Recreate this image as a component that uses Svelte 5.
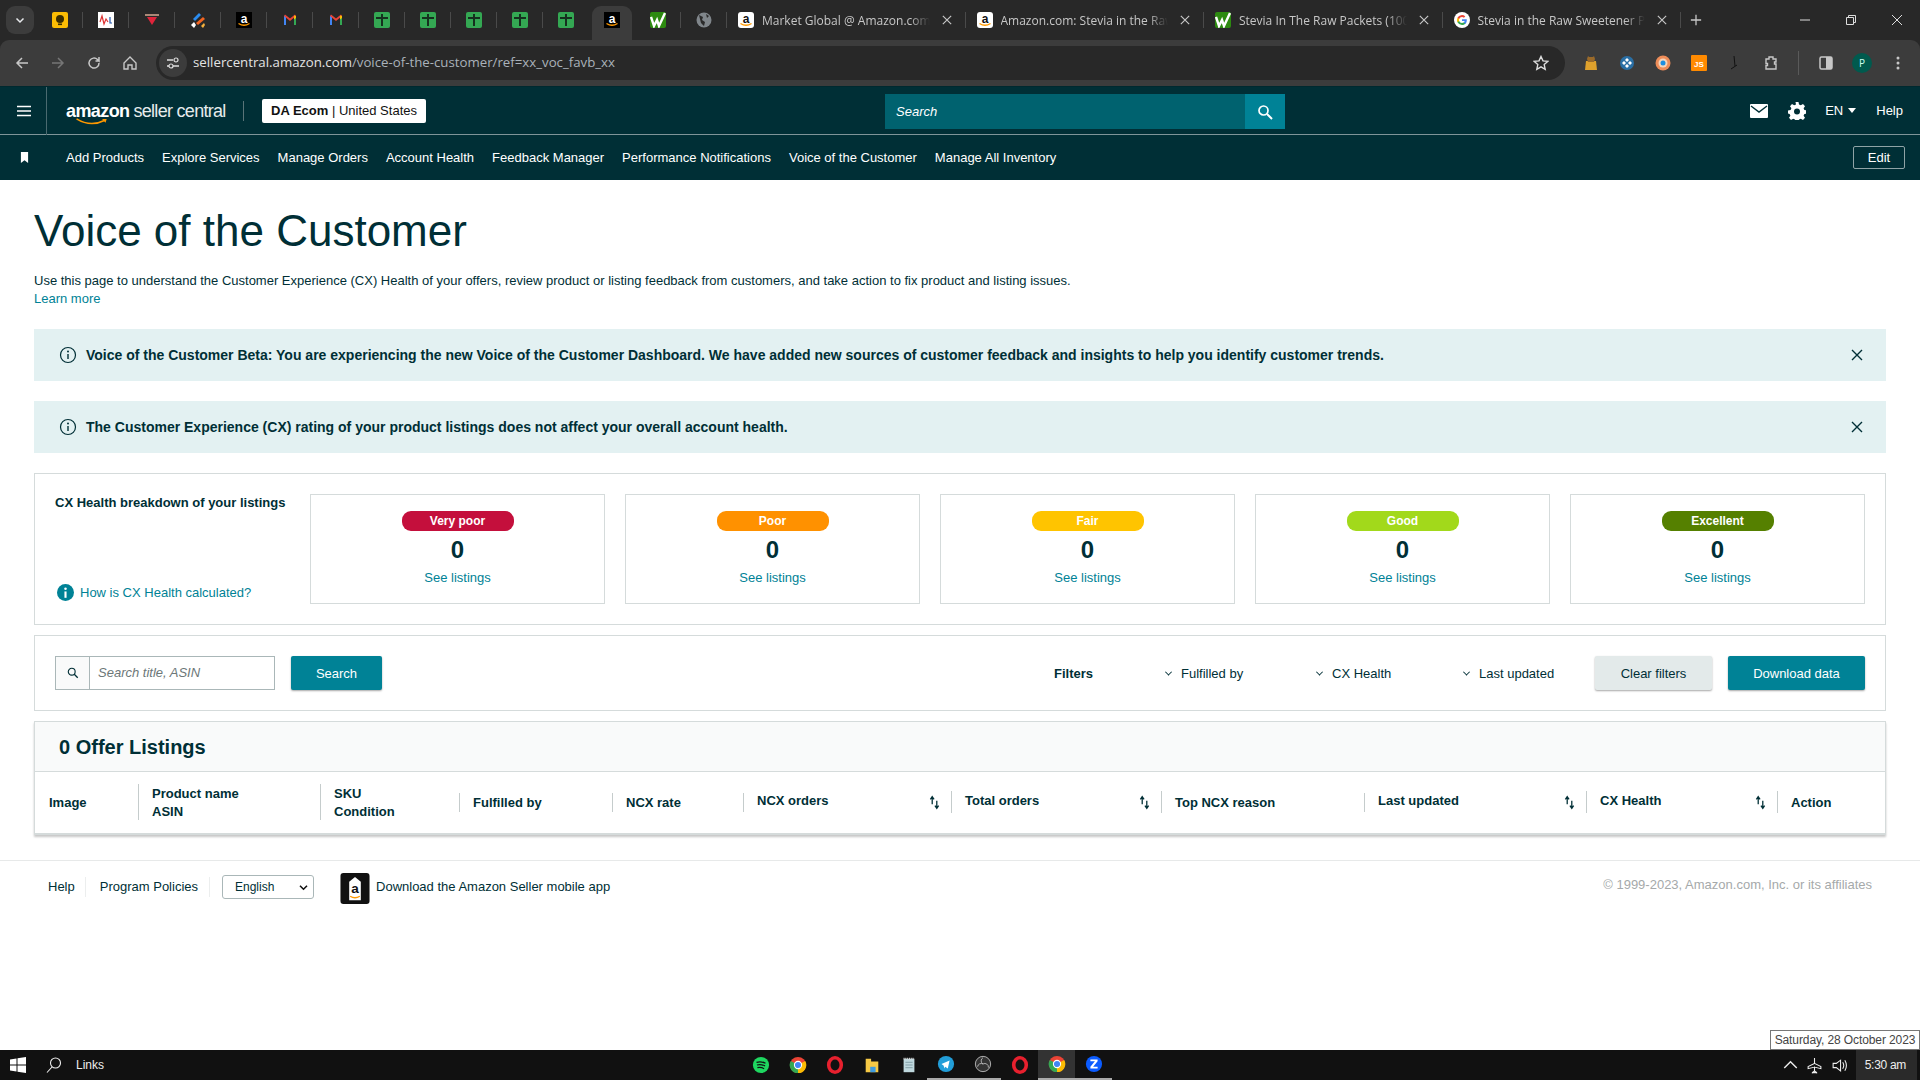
<script>
  const pinned = ['keep','wl','red','stack','amazon','gmail','gmail','sheet','sheet','sheet','sheet','sheet','amazon-active','wave','globe'];
  const tabs = [
    { icon: 'amazon-round', title: 'Market Global @ Amazon.com' },
    { icon: 'amazon-round', title: 'Amazon.com: Stevia in the Raw' },
    { icon: 'wave', title: 'Stevia In The Raw Packets (100' },
    { icon: 'google', title: 'Stevia in the Raw Sweetener Pa' }
  ];
  const nav = ['Add Products','Explore Services','Manage Orders','Account Health','Feedback Manager','Performance Notifications','Voice of the Customer','Manage All Inventory'];
  const health = [
    { label: 'Very poor', cls: 'vpoor' },
    { label: 'Poor', cls: 'poor' },
    { label: 'Fair', cls: 'fair' },
    { label: 'Good', cls: 'good' },
    { label: 'Excellent', cls: 'excellent' }
  ];
  const cols = [
    { lines: ['Image'], sep: '' },
    { lines: ['Product name','ASIN'], sep: 'tall' },
    { lines: ['SKU','Condition'], sep: 'tall' },
    { lines: ['Fulfilled by'], sep: 'short' },
    { lines: ['NCX rate'], sep: 'short' },
    { lines: ['NCX orders'], sep: 'short', sort: true },
    { lines: ['Total orders'], sep: 'mid', sort: true },
    { lines: ['Top NCX reason'], sep: 'mid' },
    { lines: ['Last updated'], sep: 'short', sort: true },
    { lines: ['CX Health'], sep: 'mid', sort: true },
    { lines: ['Action'], sep: 'mid' }
  ];
  const taskIcons = ['spotify','chrome','opera','folder','note','telegram','obs','opera','chrome','zoom'];
  const underlined = [5,6,8,9];
</script>

{#snippet favicon(kind)}
  {#if kind === 'keep'}
    <svg class="fav" viewBox="0 0 16 16"><rect width="16" height="16" rx="2" fill="#fbbc04"/><circle cx="8" cy="7" r="4" fill="#3a2d00"/><rect x="6" y="11.5" width="4" height="1.6" fill="#3a2d00"/></svg>
  {:else if kind === 'wl'}
    <svg class="fav" viewBox="0 0 16 16"><rect width="16" height="16" fill="#fff"/><path d="M2 10l2-6 2 8 2-5 2 3" fill="none" stroke="#d33" stroke-width="1.2"/><path d="M12 5v6h2" fill="none" stroke="#25a" stroke-width="1.2"/></svg>
  {:else if kind === 'red'}
    <svg class="fav" viewBox="0 0 16 16"><rect x="1" y="2" width="14" height="2" fill="#a87"/><path d="M3 5h10l-5 8z" fill="#e0243b"/></svg>
  {:else if kind === 'stack'}
    <svg class="fav" viewBox="0 0 16 16"><path d="M3 7l6-6 2 2-6 6z" fill="#2a8cf0"/><path d="M6 11l7-6 2 2-7 6z" fill="#f26522"/><path d="M11 14l3-3 1 2-2 3z" fill="#f5b03c"/><path d="M1 13l3-3 2 3-2 3z" fill="#fff"/></svg>
  {:else if kind === 'amazon' || kind === 'amazon-active'}
    <svg class="fav" viewBox="0 0 16 16"><rect width="16" height="16" fill="#000"/><text x="8" y="10.5" text-anchor="middle" class="fava">a</text><path d="M2.5 11.5q5.500 3.500 11 0" fill="none" stroke="#f90" stroke-width="1.300"/></svg>
  {:else if kind === 'amazon-round'}
    <svg class="fav" viewBox="0 0 16 16"><rect width="16" height="16" rx="3" fill="#fff"/><text x="8" y="10.500" text-anchor="middle" class="favb">a</text><path d="M2.500 11.500q5.500 3.500 11 0" fill="none" stroke="#f90" stroke-width="1.300"/></svg>
  {:else if kind === 'gmail'}
    <svg class="fav" viewBox="0 0 16 16"><path d="M2 13V4l2-.5V13z" fill="#4285f4"/><path d="M12 13V3.500l2 .5v9z" fill="#34a853"/><path d="M2 4l1-1.500 5 4 5-4L14 4 8 9z" fill="#ea4335"/><path d="M12 3.500L14 4v2l-2 1.500z" fill="#fbbc04"/></svg>
  {:else if kind === 'sheet'}
    <svg class="fav" viewBox="0 0 16 16"><rect width="16" height="16" rx="2" fill="#34a853"/><path d="M2 6h12M8 2v12" stroke="#16301f" stroke-width="2"/></svg>
  {:else if kind === 'wave'}
    <svg class="fav" viewBox="0 0 16 16"><rect width="16" height="16" rx="2" fill="#2d8a10"/><path d="M1 5l3 9 3-6 2 6 6-13" fill="none" stroke="#fff" stroke-width="2.400"/></svg>
  {:else if kind === 'globe'}
    <svg class="fav" viewBox="0 0 16 16"><circle cx="8" cy="8" r="7.500" fill="#80868b"/><path d="M3 3l4 2-1 3 3 2-1 4-3-3zM10 2l3 2-2 2z" fill="#2b2b2b"/></svg>
  {:else if kind === 'google'}
    <svg class="fav" viewBox="0 0 16 16"><circle cx="8" cy="8" r="8" fill="#fff"/><path d="M12.800 8.200c0-.4 0-.7-.1-1H8v1.900h2.700a2.400 2.400 0 0 1-1 1.500v1.300h1.600c1-.9 1.500-2.200 1.500-3.700z" fill="#4285f4"/><path d="M8 13c1.400 0 2.500-.4 3.300-1.200l-1.600-1.300c-.4.300-1 .5-1.700.5-1.300 0-2.400-.9-2.800-2H3.500v1.300A5 5 0 0 0 8 13z" fill="#34a853"/><path d="M5.200 9a3 3 0 0 1 0-2V5.700H3.500a5 5 0 0 0 0 4.600z" fill="#fbbc04"/><path d="M8 5c.8 0 1.400.3 1.900.8l1.400-1.400A5 5 0 0 0 3.500 5.700L5.200 7c.4-1.200 1.500-2 2.800-2z" fill="#ea4335"/></svg>
  {/if}
{/snippet}

{#snippet taskIcon(kind)}
  <svg class="task-svg" viewBox="0 0 20 20">
    {#if kind === 'spotify'}
      <circle cx="10" cy="10" r="9" fill="#1ed760"/><path d="M5 7q5-1.500 10 1M5.500 10q4.500-1 9 1M6 13q4-.8 7.500 1" fill="none" stroke="#111" stroke-width="1.400"/>
    {:else if kind === 'chrome'}
      <circle cx="10" cy="10" r="9" fill="#ea4335"/><path d="M10 10L2 5.500A9 9 0 0 0 10 19z" fill="#34a853"/><path d="M10 10l8-4.500A9 9 0 0 1 10 19z" fill="#fbbc04"/><circle cx="10" cy="10" r="4" fill="#4285f4" stroke="#fff" stroke-width="1.200"/>
    {:else if kind === 'opera'}
      <ellipse cx="10" cy="10" rx="7" ry="8" fill="none" stroke="#e7202e" stroke-width="4"/>
    {:else if kind === 'folder'}
      <path d="M3 3h6v3h8v12H3z" fill="#f6c945"/><rect x="8" y="12" width="6" height="6" fill="#3f9be0"/>
    {:else if kind === 'note'}
      <path d="M4 3h12v15H4z" fill="#bfd8de"/><path d="M6 7h8M6 10h8M6 13h8" stroke="#7d9aa3"/><path d="M4 3h12" stroke="#ddd" stroke-dasharray="1 1" stroke-width="2"/>
    {:else if kind === 'telegram'}
      <circle cx="10" cy="10" r="9" fill="#229ed9"/><path d="M5 10l9-4-2 9-3-2-1 2-.5-3z" fill="#fff"/>
    {:else if kind === 'obs'}
      <circle cx="10" cy="10" r="8.500" fill="#333" stroke="#bbb"/><path d="M10 3a4 4 0 0 0 0 7 4 4 0 0 1 6 4M4 13a4 4 0 0 1 6-3" fill="none" stroke="#bbb"/>
    {:else if kind === 'zoom'}
      <circle cx="10" cy="10" r="9" fill="#0b5cff"/><path d="M6 5h8v2L9 13h5v2H6v-2l5-6H6z" fill="#fff"/>
    {/if}
  </svg>
{/snippet}

{#snippet sortIcon()}
  <svg class="sort" viewBox="0 0 12 16"><path d="M3.500 10V2M1.500 4.500l2-3 2 3" fill="none" stroke="#002f36" stroke-width="1.400"/><path d="M8.500 6v8M6.500 11.500l2 3 2-3" fill="none" stroke="#002f36" stroke-width="1.400"/></svg>
{/snippet}

{#snippet closeIcon()}
  <svg class="x" viewBox="0 0 12 12"><path d="M1 1l10 10M11 1L1 11" stroke="currentColor" stroke-width="1.400"/></svg>
{/snippet}

{#snippet infoIcon()}
  <svg class="info" viewBox="0 0 18 18"><circle cx="9" cy="9" r="7.500" fill="none" stroke="#002f36" stroke-width="1.200"/><path d="M9 8v5" stroke="#002f36" stroke-width="1.400"/><circle cx="9" cy="5.500" r="1" fill="#002f36"/></svg>
{/snippet}

<div class="screen">
  <div class="tabstrip">
    <button class="tab-search" aria-label="Search tabs"><svg viewBox="0 0 12 12"><path d="M2.500 4.500L6 8l3.500-3.500" fill="none" stroke="#e8eaed" stroke-width="1.500"/></svg></button>
    {#each pinned as p, i}
      <div class="pin" class:active={p === 'amazon-active'} class:nosep={p === 'amazon-active' || pinned[i+1] === 'amazon-active'}>{@render favicon(p)}</div>
    {/each}
    <div class="tabs">
      {#each tabs as t}
        <div class="tab">
          {@render favicon(t.icon)}
          <span class="tab-title">{t.title}</span>
          <span class="tab-x">{@render closeIcon()}</span>
        </div>
      {/each}
    </div>
    <svg class="plus" viewBox="0 0 14 14"><path d="M7 1v12M1 7h12" stroke="#c7c7c7" stroke-width="1.500"/></svg>
    <div class="winctl">
      <svg viewBox="0 0 12 12"><path d="M1 6h10" stroke="#ddd"/></svg>
      <svg viewBox="0 0 12 12"><path d="M1.500 3.500h7v7h-7zM3.500 3.500v-2h7v7h-2" fill="none" stroke="#ddd"/></svg>
      <svg viewBox="0 0 12 12"><path d="M1 1l10 10M11 1L1 11" stroke="#ddd"/></svg>
    </div>
  </div>

  <div class="toolbar">
    <svg class="tb" viewBox="0 0 16 16"><path d="M14 8H3M8 3L3 8l5 5" fill="none" stroke="#c7c7c7" stroke-width="1.500"/></svg>
    <svg class="tb" viewBox="0 0 16 16"><path d="M2 8h11M8 3l5 5-5 5" fill="none" stroke="#767676" stroke-width="1.500"/></svg>
    <svg class="tb" viewBox="0 0 16 16"><path d="M13 8a5 5 0 1 1-1.500-3.500L13 6V2M13 6H9.500" fill="none" stroke="#c7c7c7" stroke-width="1.500"/></svg>
    <svg class="tb" viewBox="0 0 16 16"><path d="M2 8l6-6 6 6v6h-4v-4H6v4H2z" fill="none" stroke="#c7c7c7" stroke-width="1.400"/></svg>
    <div class="omni">
      <span class="site"><svg viewBox="0 0 14 14"><path d="M1 4h6M1 10h2M7 10h6" stroke="#dedede" stroke-width="1.300"/><circle cx="10" cy="4" r="2" fill="none" stroke="#dedede" stroke-width="1.200"/><circle cx="5" cy="10" r="2" fill="none" stroke="#dedede" stroke-width="1.200"/></svg></span>
      <span class="url"><b>sellercentral.amazon.com</b>/voice-of-the-customer/ref=xx_voc_favb_xx</span>
      <svg class="star" viewBox="0 0 16 16"><path d="M8 1.500l2 4.400 4.800.5-3.600 3.200 1 4.700L8 11.900l-4.200 2.400 1-4.700L1.200 6.400 6 5.900z" fill="none" stroke="#dedede" stroke-width="1.400"/></svg>
    </div>
    <div class="exts">
      <svg viewBox="0 0 16 16"><path d="M3 6h10l1 9H2z" fill="#dfa12c"/><path d="M5 1l1 1h4l1-1 1 3-1 3H5L4 4z" fill="#9a6a2a"/></svg>
      <svg viewBox="0 0 16 16"><circle cx="8" cy="8" r="7" fill="#2a6fa5"/><path d="M8 3l2 2-2 2-2-2zM8 9l2 2-2 2-2-2zM3 8l2-2 2 2-2 2zM9 8l2-2 2 2-2 2z" fill="#fff"/></svg>
      <svg viewBox="0 0 16 16"><circle cx="8" cy="8" r="7.500" fill="#ee8d59"/><circle cx="8" cy="8" r="4.500" fill="#f4d6bd"/><circle cx="8" cy="8" r="2.500" fill="#1d8fe0"/></svg>
      <svg viewBox="0 0 16 16"><rect width="16" height="16" rx="1" fill="#ff8a00"/><text x="8" y="11.500" text-anchor="middle" class="js">JS</text></svg>
      <svg viewBox="0 0 16 16"><path d="M7 1l1 10M4 14l6-4" stroke="#111" stroke-width="1"/></svg>
      <svg viewBox="0 0 16 16"><path d="M3 4h3V2h4v2h3v3h-1.500v2H13v5H3v-3.500h1.500v-2H3z" fill="none" stroke="#c7c7c7" stroke-width="1.400"/></svg>
      <span class="tbsep"></span>
      <svg viewBox="0 0 16 16"><rect x="2" y="2" width="12" height="12" rx="1.500" fill="none" stroke="#c7c7c7" stroke-width="1.500"/><rect x="8" y="2" width="6" height="12" fill="#c7c7c7"/></svg>
      <span class="avatar">P</span>
      <svg viewBox="0 0 16 16"><circle cx="8" cy="3" r="1.500" fill="#c7c7c7"/><circle cx="8" cy="8" r="1.500" fill="#c7c7c7"/><circle cx="8" cy="13" r="1.500" fill="#c7c7c7"/></svg>
    </div>
  </div>

  <header class="sc-header">
    <div class="burger"><svg viewBox="0 0 16 12"><path d="M1 1.500h14M1 6h14M1 10.500h14" stroke="#fff" stroke-width="1.700"/></svg></div>
    <div class="logo">
      <span class="logo-az">amazon<svg class="smile" viewBox="0 0 44 10"><path d="M2 1q18 11 36 2" fill="none" stroke="#f90" stroke-width="2"/><path d="M35 1l6 0-1.500 5z" fill="#f90"/></svg></span>
      <span class="logo-sc">seller central</span>
    </div>
    <div class="account"><b>DA Ecom</b> | United States</div>
    <div class="hsearch">
      <span class="hsearch-input">Search</span>
      <span class="hsearch-btn"><svg viewBox="0 0 16 16"><circle cx="6.500" cy="6.500" r="4.500" fill="none" stroke="#fff" stroke-width="1.700"/><path d="M10 10l5 5" stroke="#fff" stroke-width="2"/></svg></span>
    </div>
    <div class="hright">
      <svg class="mail" viewBox="0 0 18 14"><rect width="18" height="14" rx="1" fill="#fff"/><path d="M1 2l8 6 8-6" fill="none" stroke="#002f36" stroke-width="1.400"/></svg>
      <svg class="gear" viewBox="0 0 18 18"><path d="M7.500 0h3l.5 2.500 1.800.8L15 2l2 2.200-1.400 2 .8 1.800 2.600.5v3l-2.600.5-.8 1.800 1.400 2-2 2.200-2.200-1.300-1.800.8-.5 2.500h-3l-.5-2.500-1.800-.8L3 18l-2-2.200 1.400-2-.8-1.800L0 11.500v-3l2.600-.5.800-1.800L2 4.200 4 2l2.200 1.300L8 2.500z" fill="#fff" fill-rule="evenodd"/><circle cx="9" cy="9.500" r="3" fill="#002f36"/></svg>
      <span class="en">EN<i class="caret"></i></span>
      <span class="help">Help</span>
    </div>
  </header>

  <nav class="sc-nav">
    <svg class="bookmark" viewBox="0 0 10 12"><path d="M1 0h8v12L5 9l-4 3z" fill="#fff"/></svg>
    <div class="nav-links">
      {#each nav as n}<span>{n}</span>{/each}
    </div>
    <span class="edit">Edit</span>
  </nav>

  <div class="content">
    <main class="page">
      <h1>Voice of the Customer</h1>
      <p class="intro">Use this page to understand the Customer Experience (CX) Health of your offers, review product or listing feedback from customers, and take action to fix product and listing issues.<br/><span class="link">Learn more</span></p>

      <div class="banner first">
        {@render infoIcon()}
        <span>Voice of the Customer Beta: You are experiencing the new Voice of the Customer Dashboard. We have added new sources of customer feedback and insights to help you identify customer trends.</span>
        {@render closeIcon()}
      </div>
      <div class="banner">
        {@render infoIcon()}
        <span>The Customer Experience (CX) rating of your product listings does not affect your overall account health.</span>
        {@render closeIcon()}
      </div>

      <section class="card breakdown">
        <div class="bd-left">
          <div class="bd-title">CX Health breakdown of your listings</div>
          <div class="bd-help">
            <svg viewBox="0 0 16 16"><circle cx="8" cy="8" r="8" fill="#008296"/><rect x="7" y="7" width="2" height="6" fill="#fff"/><circle cx="8" cy="4.500" r="1.200" fill="#fff"/></svg>
            <span class="link">How is CX Health calculated?</span>
          </div>
        </div>
        <div class="tiles">
          {#each health as h}
            <div class="tile">
              <span class="pill {h.cls}">{h.label}</span>
              <span class="zero">0</span>
              <span class="link">See listings</span>
            </div>
          {/each}
        </div>
      </section>

      <section class="card filters">
        <div class="searchbox">
          <span class="sb-icon"><svg viewBox="0 0 14 14"><circle cx="5.500" cy="5.500" r="4" fill="none" stroke="#002f36" stroke-width="1.300"/><path d="M8.500 8.500l4 4" stroke="#002f36" stroke-width="1.500"/></svg></span>
          <span class="sb-input">Search title, ASIN</span>
        </div>
        <button class="btn primary search-btn">Search</button>
        <div class="filter-right">
          <span class="f-label">Filters</span>
          <span class="f f1"><i class="chev"></i>Fulfilled by</span>
          <span class="f f2"><i class="chev"></i>CX Health</span>
          <span class="f f3"><i class="chev"></i>Last updated</span>
          <button class="btn clear">Clear filters</button>
          <button class="btn primary download">Download data</button>
        </div>
      </section>

      <section class="listings">
        <div class="list-head">0 Offer Listings</div>
        <div class="list-cols">
          {#each cols as c}
            <div class="col {c.sep}" class:sortable={c.sort}>
              <div class="col-text">{#each c.lines as l}<div>{l}</div>{/each}</div>
              {#if c.sort}{@render sortIcon()}{/if}
            </div>
          {/each}
        </div>
      </section>
    </main>

    <footer class="sc-footer">
      <span class="fl">Help</span>
      <span class="fl pp">Program Policies</span>
      <div class="lang">English<svg viewBox="0 0 10 8"><path d="M1 2l4 4 4-4" fill="none" stroke="#111" stroke-width="1.800"/></svg></div>
      <svg class="app" viewBox="0 0 30 32"><rect width="30" height="32" rx="3" fill="#111"/><path d="M9 9l6-5 6 5v19H9z" fill="#fff"/><text x="15" y="21" text-anchor="middle" class="appa">a</text><path d="M10 24q5 3 10 0" fill="none" stroke="#f90" stroke-width="1.400"/></svg>
      <span class="fl dl">Download the Amazon Seller mobile app</span>
      <span class="copy">© 1999-2023, Amazon.com, Inc. or its affiliates</span>
    </footer>
  </div>

  <div class="taskbar">
    <svg class="win" viewBox="0 0 16 16"><path d="M0 2.500l6.500-1V7.500H0zM7.500 1.300L16 0v7.500H7.500zM0 8.500h6.500v6L0 13.500zM7.500 8.500H16V16l-8.500-1.300z" fill="#fff"/></svg>
    <svg class="tsearch" viewBox="0 0 16 16"><circle cx="9.500" cy="6" r="5" fill="none" stroke="#eee" stroke-width="1.100"/><path d="M6 10l-5 5.500" stroke="#eee" stroke-width="1.100"/></svg>
    <span class="links">Links</span>
    <div class="apps">
      {#each taskIcons as k, i}
        <span class="app-slot" class:running={underlined.includes(i)} class:current={i === 8}>{@render taskIcon(k)}</span>
      {/each}
    </div>
    <div class="tray">
      <svg viewBox="0 0 12 12"><path d="M1 8l5-5 5 5" fill="none" stroke="#eee" stroke-width="1.100"/></svg>
      <svg class="plane" viewBox="0 0 16 16"><path d="M8 1v5L2 9v2l6-1.500V13l-2 1.500V15l2-.5 2 .5v-.5L8 13V9.500L14 11V9L8 6" fill="none" stroke="#eee"/></svg>
      <svg class="spk" viewBox="0 0 16 16"><path d="M2 6h3l4-3v10l-4-3H2z" fill="none" stroke="#eee"/><path d="M11 5q2 3 0 6M13 3q3 5 0 10" fill="none" stroke="#eee"/></svg>
      <span class="clock">5:30 am</span>
    </div>
    <div class="tooltip">Saturday, 28 October 2023</div>
  </div>
</div>

<style>
  :global(body) { margin: 0; background: #fff; }
  .screen { width: 1920px; height: 1080px; display: flex; flex-direction: column; overflow: hidden; background: #282828; font-family: "Liberation Sans", Arial, sans-serif; font-size: 13px; color: #002f36; }
  svg { display: block; flex: none; }
  button { font-family: inherit; border: 0; padding: 0; }

  .tabstrip { height: 40px; flex: none; background: #282828; display: flex; align-items: center; padding-left: 6px; position: relative; font-family: "Open Sans", sans-serif; }
  .tab-search { width: 28px; height: 28px; border-radius: 9px; background: #3c3c3c; margin-right: 3px; display: flex; align-items: center; justify-content: center; }
  .tab-search svg { width: 12px; height: 12px; }
  .pin { width: 46px; height: 40px; display: flex; align-items: center; justify-content: center; box-sizing: border-box; position: relative; }
  .pin::after { content: ""; position: absolute; right: 0; top: 12px; height: 16px; width: 1px; background: #4a4a4a; }
  .pin.nosep::after { display: none; }
  .pin.active { background: #3c3c3c; border-radius: 9px 9px 0 0; margin-top: 6px; height: 34px; width: 40px; margin-left: 3px; margin-right: 3px; padding-bottom: 6px; }
  .fav { width: 16px; height: 16px; }
  .fava { font: 700 12px "Liberation Sans", sans-serif; fill: #fff; }
  .favb { font: 700 12px "Liberation Sans", sans-serif; fill: #111; }
  .js { font: 700 8px "Liberation Sans", sans-serif; fill: #fff; }
  .tabs { display: flex; padding-left: 11px; }
  .tab { width: 238.500px; height: 40px; box-sizing: border-box; display: flex; align-items: center; padding: 0 14px 0 0; gap: 8px; position: relative; color: #c7c7c7; font-size: 12px; }
  .tab::after { content: ""; position: absolute; right: 11px; top: 12px; height: 16px; width: 1px; background: #4a4a4a; }
  .tab-title { flex: 1; min-width: 0; overflow: hidden; white-space: nowrap; font-weight: 500; -webkit-mask-image: linear-gradient(90deg, #000 88%, transparent); mask-image: linear-gradient(90deg, #000 88%, transparent); }
  .tab-x { width: 10px; color: #c7c7c7; margin-left: 4px; margin-right: 11px; }
  .tab-x .x { width: 10px; height: 10px; }
  .plus { width: 12px; height: 12px; margin-left: -2px; }
  .winctl { margin-left: auto; display: flex; gap: 34px; padding-right: 17px; }
  .winctl svg { width: 12px; height: 12px; }

  .toolbar { height: 46px; flex: none; background: #3c3c3c; border-radius: 9px 9px 0 0; display: flex; align-items: center; padding: 0 14px; box-sizing: border-box; }
  .tb { width: 16px; height: 16px; margin-right: 20px; }
  .omni { margin-left: -2px; width: 1410px; height: 34px; border-radius: 17px; background: #282828; display: flex; align-items: center; padding: 0 16px 0 3px; box-sizing: border-box; }
  .site { width: 28px; height: 28px; border-radius: 50%; background: #3c3c3c; display: flex; align-items: center; justify-content: center; }
  .site svg { width: 14px; height: 14px; }
  .url { margin-left: 6px; color: #aab2ba; font: 13.250px/1 "Open Sans", sans-serif; flex: 1; }
  .url b { font-weight: 400; color: #e3e3e3; }
  .star { width: 16px; height: 16px; }
  .exts { display: flex; align-items: center; margin-left: 18px; gap: 20px; }
  .exts svg { width: 16px; height: 16px; }
  .tbsep { width: 1px; height: 24px; background: #5a5a5a; margin: 0 -1px; }
  .avatar { width: 20px; height: 20px; border-radius: 50%; background: #005a4e; color: #cfe; font: 10px/20px "Open Sans", sans-serif; text-align: center; margin: 0 -2px; }

  .sc-header { height: 49px; flex: none; background: #002f36; border-top: 1px solid #00292f; border-bottom: 1px solid #7f9599; box-sizing: border-box; display: flex; align-items: center; color: #fff; }
  .burger { width: 47px; height: 48px; box-sizing: border-box; border-right: 1px solid #4a6a70; display: flex; align-items: center; justify-content: center; padding-left: 1px; }
  .burger svg { width: 16px; height: 12px; }
  .logo { margin-left: 19px; display: flex; align-items: baseline; width: 177px; border-right: 1px solid #5a7478; height: 20px; }
  .logo-az { font-weight: 700; font-size: 18px; line-height: 20px; letter-spacing: -.6px; position: relative; }
  .smile { position: absolute; left: 9px; top: 17px; width: 34px; height: 8px; }
  .logo-sc { font-size: 18px; line-height: 20px; margin-left: 4px; letter-spacing: -.7px; color: #e6ecec; }
  .account { margin-left: 18px; width: 164px; height: 24px; box-sizing: border-box; background: #fff; color: #111; border-radius: 2px; font-size: 13px; line-height: 24px; text-align: center; white-space: nowrap; }
  .account b { font-weight: 700; }
  .hsearch { margin-left: 459px; margin-top: 2px; display: flex; height: 35px; }
  .hsearch-input { width: 360px; background: #00626f; color: #fff; font-style: italic; line-height: 35px; padding-left: 11px; box-sizing: border-box; }
  .hsearch-btn { width: 40px; background: #008296; display: flex; align-items: center; justify-content: center; }
  .hsearch-btn svg { width: 16px; height: 16px; }
  .hright { margin-left: auto; display: flex; align-items: center; padding-right: 17px; }
  .mail { width: 18px; height: 14px; }
  .gear { width: 18px; height: 18px; margin-left: 20px; }
  .en { margin-left: 19px; display: flex; align-items: center; gap: 5px; }
  .caret { width: 0; height: 0; border: 4px solid transparent; border-top: 5px solid #fff; border-bottom: 0; }
  .help { margin-left: 20px; }

  .sc-nav { height: 45px; flex: none; background: #002f36; display: flex; align-items: center; color: #fff; }
  .bookmark { width: 9px; height: 11px; margin-left: 20px; }
  .nav-links { display: flex; gap: 18px; margin-left: 37px; }
  .edit { margin-left: auto; margin-right: 15px; width: 52px; height: 23px; box-sizing: border-box; border: 1px solid #8fa3a6; border-radius: 2px; text-align: center; line-height: 21px; }

  .content { flex: 1; background: #fff; display: flex; flex-direction: column; }
  .page { padding: 26px 34px 0; }
  h1 { margin: 0; font-weight: 400; font-size: 44px; line-height: 50px; color: #002f36; }
  .intro { margin: 16px 0 0; line-height: 18px; }
  .link { color: #008296; }
  .banner { margin-top: 20px; height: 52px; background: #e3f1f2; display: flex; align-items: center; padding: 0 23px 0 25px; font-weight: 700; font-size: 14px; }
  .banner.first { margin-top: 21px; }
  .banner span { flex: 1; margin-left: 9px; }
  .info { width: 18px; height: 18px; }
  .x { width: 12px; height: 12px; }
  .banner .x { color: #002f36; }

  .card { border: 1px solid #d5dbdb; box-sizing: border-box; }
  .breakdown { margin-top: 20px; padding: 20px; display: flex; height: 152px; }
  .bd-left { width: 255px; flex: none; display: flex; flex-direction: column; justify-content: space-between; }
  .bd-title { font-weight: 700; line-height: 18px; }
  .bd-help { display: flex; align-items: center; gap: 6px; padding: 0 0 3px 2px; }
  .bd-help svg { width: 17px; height: 17px; }
  .tiles { flex: 1; display: grid; grid-template-columns: repeat(5, 1fr); gap: 20px; }
  .tile { border: 1px solid #d5dbdb; display: flex; flex-direction: column; align-items: center; padding-top: 16px; box-sizing: border-box; }
  .pill { width: 112px; height: 20px; border-radius: 9px; color: #fff; font-weight: 700; font-size: 12px; line-height: 20px; text-align: center; }
  .vpoor { background: #c40f3c; }
  .poor { background: #ff9100; }
  .fair { background: #ffc400; }
  .good { background: #a2d91b; }
  .excellent { background: #558000; }
  .zero { font-size: 24px; font-weight: 700; line-height: 28px; margin-top: 5px; }
  .tile .link { margin-top: 5px; line-height: 18px; }

  .filters { margin-top: 10px; height: 76px; display: flex; align-items: center; padding: 0 20px; }
  .searchbox { display: flex; width: 220px; height: 34px; border: 1px solid #aab7b8; box-sizing: border-box; }
  .sb-icon { width: 33px; background: #f9fafa; border-right: 1px solid #aab7b8; display: flex; align-items: center; justify-content: center; }
  .sb-icon svg { width: 12px; height: 12px; }
  .sb-input { flex: 1; padding-left: 8px; font-style: italic; color: #6c7778; line-height: 32px; }
  .btn { height: 34px; border-radius: 2px; font-size: 13px; box-shadow: 0 1px 2px rgba(0,0,0,.35); }
  .primary { background: #008296; color: #fff; }
  .search-btn { width: 91px; margin-left: 16px; }
  .filter-right { margin-left: auto; display: flex; align-items: center; }
  .f-label { font-weight: 700; width: 111px; }
  .f { display: flex; align-items: center; gap: 10px; white-space: nowrap; }
  .f1 { width: 151px; }
  .f2 { width: 147px; }
  .f3 { width: 132px; }
  .chev { width: 4px; height: 4px; border-right: 1px solid #002f36; border-bottom: 1px solid #002f36; transform: rotate(45deg) translate(-1px,-1px); margin-left: 1px; }
  .clear { width: 117px; background: #e3eaea; color: #002f36; margin-right: 16px; }
  .download { width: 137px; }

  .listings { margin-top: 10px; border: 1px solid #d5dbdb; box-sizing: border-box; height: 114px; box-shadow: 0 2px 2px rgba(0,0,0,.22); border-bottom: 2px solid #d5dbdb; }
  .list-head { height: 50px; background: #f9fafa; border-bottom: 1px solid #d5dbdb; box-sizing: border-box; padding-left: 24px; font-size: 20px; font-weight: 700; line-height: 50px; }
  .list-cols { display: grid; grid-template-columns: 103px 182px 139px 153px 131px 208px 210px 203px 222px 191px 1fr; height: 61px; }
  .col { position: relative; display: flex; align-items: center; padding: 0 14px; box-sizing: border-box; font-weight: 700; line-height: 18px; }
  .col.sortable .col-text { flex: 1; margin-top: -4px; }
  .col::before { content: ""; position: absolute; left: 0; width: 1px; background: #c5cccc; }
  .col.tall::before { top: 12px; height: 36px; }
  .col.short::before { top: 21px; height: 19px; }
  .col.mid::before { top: 19px; height: 22px; }
  .sort { width: 11px; height: 15px; margin-right: -3px; }

  .sc-footer { margin-top: 25px; height: 60px; flex: none; border-top: 1px solid #e7e9e9; box-sizing: border-box; display: flex; align-items: flex-start; padding: 10px 48px 0 48px; }
  .fl { line-height: 32px; white-space: nowrap; }
  .pp { margin-left: 25px; position: relative; }
  .pp::before, .pp::after { content: ""; position: absolute; top: 6px; height: 20px; width: 1px; background: #eceeee; }
  .pp::before { left: -15px; }
  .pp::after { right: -12px; }
  .lang { margin-left: 24px; margin-top: 4px; width: 92px; height: 24px; box-sizing: border-box; border: 1px solid #aab7b8; border-radius: 3px; display: flex; align-items: center; justify-content: space-between; padding: 0 5px 0 12px; font-size: 12px; }
  .lang svg { width: 9px; height: 7px; }
  .app { width: 30px; height: 31px; margin-left: 26px; margin-top: 2px; }
  .appa { font: 700 14px "Liberation Sans", sans-serif; fill: #111; }
  .dl { margin-left: 6px; }
  .copy { margin-left: auto; color: #a5a9aa; line-height: 28px; }

  .taskbar { height: 30px; background: #111; flex: none; display: flex; align-items: center; position: relative; color: #eee; font: 12px "Liberation Sans", sans-serif; }
  .win { width: 16px; height: 16px; margin-left: 10px; }
  .tsearch { width: 16px; height: 16px; margin-left: 20px; }
  .links { margin-left: 14px; }
  .apps { display: flex; margin-left: 638px; }
  .app-slot { width: 37px; height: 30px; display: flex; align-items: center; justify-content: center; box-sizing: border-box; }
  .app-slot.running { border-bottom: 2px solid #aaa; }
  .app-slot.current { background: #333; }
  .task-svg { width: 18px; height: 18px; }
  .tray { margin-left: auto; display: flex; align-items: center; gap: 8px; height: 30px; }
  .tray svg { width: 15px; height: 15px; }
  .tray .plane { width: 17px; height: 17px; }
  .tray .spk { width: 17px; height: 17px; }
  .clock { background: #2a2a2a; height: 30px; line-height: 30px; padding: 0 11px 0 9px; letter-spacing: -.3px; margin-right: 3px; }
  .tooltip { position: absolute; right: 0; top: -20px; width: 150px; height: 20px; box-sizing: border-box; background: #fff; border: 1px solid #777; color: #444; font-size: 12px; line-height: 18px; text-align: center; white-space: nowrap; letter-spacing: -.1px; }
</style>
